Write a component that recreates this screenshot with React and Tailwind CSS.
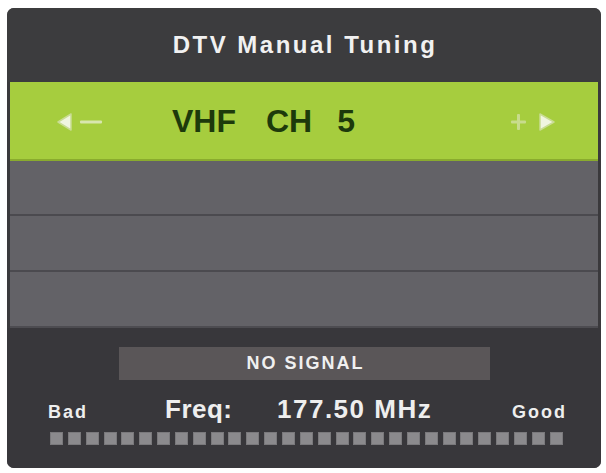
const font = { fontFamily: '"Liberation Sans", Arial, sans-serif' };

const LeftArrow = () => (
  <svg width="48" height="22" viewBox="0 0 48 22">
    <path d="M2 11 L15 3 L15 19 Z" fill="#f0f5e0" stroke="#c9dc93" strokeWidth="1.5" strokeLinejoin="round" />
    <rect x="24" y="9.5" width="22" height="3" rx="1" fill="#d8e6ae" />
  </svg>
);

const RightArrow = () => (
  <svg width="48" height="22" viewBox="0 0 48 22">
    <rect x="2" y="9.5" width="15" height="3" rx="1" fill="#c8dc8c" />
    <rect x="8" y="3" width="3" height="16" rx="1" fill="#c8dc8c" />
    <path d="M45 11 L31 3 L31 19 Z" fill="#f0f5e0" stroke="#c9dc93" strokeWidth="1.5" strokeLinejoin="round" />
  </svg>
);

export default function App() {
  const bars = Array.from({ length: 29 });

  return (
    <div className="min-h-screen bg-white pt-[8px] pl-[7px]" style={font}>
      <div className="w-[594px] h-[460px] bg-[#3a393c] rounded-[7px] flex flex-col overflow-hidden">
        {/* Title */}
        <div className="h-[74px] flex items-center justify-center bg-[#3c3c3e]">
          <span className="text-[24px] font-bold text-[#f1f1f1] tracking-[2.5px] pl-[2px]">
            DTV Manual Tuning
          </span>
        </div>

        {/* Channel selector */}
        <div className="mx-[3px] h-[79px] bg-[#a6cd3e] border-b-2 border-[#8aab2e] flex items-center">
          <div className="ml-[46px] mt-[2px]">
            <LeftArrow />
          </div>
          <div className="ml-[68px] flex items-center text-[32px] font-bold text-[#1d3a0b] leading-none">
            <span>VHF</span>
            <span className="ml-[30px]">CH</span>
            <span className="ml-[25px]">5</span>
          </div>
          <div className="ml-auto mr-[41px] mt-[2px]">
            <RightArrow />
          </div>
        </div>

        {/* Empty rows */}
        <div className="mx-[3px] h-[55px] bg-[#636267] border-b-2 border-[#4b4a4f]"></div>
        <div className="mx-[3px] h-[56px] bg-[#636267] border-b-2 border-[#4b4a4f]"></div>
        <div className="mx-[3px] h-[56px] bg-[#636267] border-b-2 border-[#4d4c51]"></div>

        {/* Signal section */}
        <div className="flex-1 bg-[#38373b] flex flex-col">
          <div className="mt-[19px] ml-[112px] w-[371px] h-[33px] bg-[#5a5658] flex items-center justify-center">
            <span className="text-[18px] font-bold text-[#f0f0f0] tracking-[2px] pl-[2px]">
              NO SIGNAL
            </span>
          </div>

          <div className="mt-[16px] flex items-baseline leading-none text-[#eeeeee]">
            <div className="ml-[41px] w-[117px] text-[18px] font-bold tracking-[2px]">Bad</div>
            <div className="w-[112px] text-[26px] font-bold tracking-[0.5px]">Freq:</div>
            <div className="text-[26px] font-bold tracking-[1.5px]">177.50 MHz</div>
            <div className="ml-auto mr-[34px] text-[18px] font-bold tracking-[2px]">Good</div>
          </div>

          <div className="mt-[10px] ml-[43px] mr-[38px] flex justify-between">
            {bars.map((_, i) => (
              <div
                key={i}
                className="w-[13px] h-[13px] bg-[#8b8a8d] border border-[#7a797c]"
              ></div>
            ))}
          </div>
        </div>
      </div>
    </div>
  );
}
